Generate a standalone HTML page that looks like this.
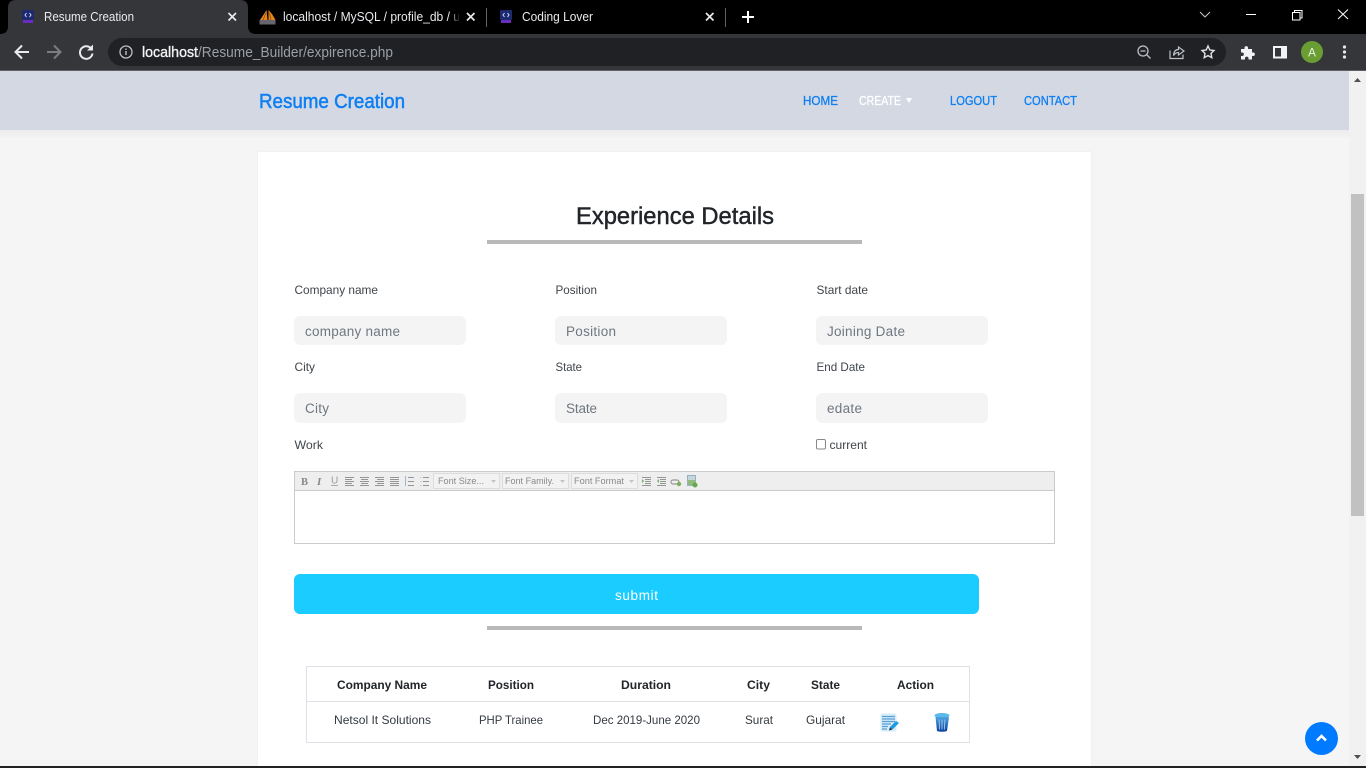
<!DOCTYPE html>
<html><head><meta charset="utf-8"><title>Resume Creation</title>
<style>
html,body{margin:0;padding:0;width:1366px;height:768px;overflow:hidden;background:#f5f5f5}
svg{display:block;position:absolute;left:0;top:0}
text{font-family:"Liberation Sans",sans-serif;white-space:pre}
</style></head><body>
<svg width="1366" height="768" viewBox="0 0 1366 768" xmlns="http://www.w3.org/2000/svg">
<defs>
<linearGradient id="sh" x1="0" y1="0" x2="0" y2="1"><stop offset="0" stop-color="#ebebeb"/><stop offset="1" stop-color="#f5f5f5"/></linearGradient>
<linearGradient id="fade" x1="0" y1="0" x2="1" y2="0"><stop offset="0" stop-color="#000" stop-opacity="0"/><stop offset="1" stop-color="#000"/></linearGradient>
<linearGradient id="tr" x1="0" y1="0" x2="0" y2="1"><stop offset="0" stop-color="#4aa3e0"/><stop offset="1" stop-color="#0b3f9e"/></linearGradient>
<g id="fav"><rect x="0" y="0" width="12" height="10" rx="1" fill="#1d2a6e"/><rect x="1" y="10" width="10" height="3" fill="#6a2bc0"/><path d="M4.500 3 L3 5 L4.500 7 M7.500 3 L9 5 L7.500 7" stroke="#cfd6ff" stroke-width="1" fill="none"/></g>
</defs>

<!-- page -->
<rect width="1366" height="768" fill="#f5f5f5"/>
<rect x="0" y="130" width="1349" height="9" fill="url(#sh)"/>
<rect x="0" y="71" width="1349" height="59" fill="#d4d8e3"/>
<rect x="257" y="151" width="835" height="620" fill="#f1f1f1"/>
<rect x="258" y="152" width="833" height="620" fill="#ffffff"/>

<!-- nav -->
<text x="259" y="108" font-size="20" fill="#0d7ff2" stroke="#0d7ff2" stroke-width=".5" textLength="146" lengthAdjust="spacingAndGlyphs">Resume Creation</text>
<g font-size="12.500" stroke-width=".3">
<text x="803" y="105" fill="#0d7ff2" stroke="#0d7ff2" textLength="35" lengthAdjust="spacingAndGlyphs">HOME</text>
<text x="859" y="105" fill="#ffffff" stroke="#ffffff" textLength="42" lengthAdjust="spacingAndGlyphs">CREATE</text>
<text x="950" y="105" fill="#0d7ff2" stroke="#0d7ff2" textLength="47" lengthAdjust="spacingAndGlyphs">LOGOUT</text>
<text x="1024" y="105" fill="#0d7ff2" stroke="#0d7ff2" textLength="53" lengthAdjust="spacingAndGlyphs">CONTACT</text>
</g>
<path d="M906 98 L912 98 L909 103 Z" fill="#fff"/>

<!-- heading -->
<text x="576" y="224" font-size="24" fill="#212529" stroke="#212529" stroke-width=".45" textLength="198" lengthAdjust="spacingAndGlyphs">Experience Details</text>
<rect x="487" y="240" width="375" height="4" fill="#b9b9b9"/>

<!-- labels -->
<g font-size="12" fill="#3f454b">
<text x="294.500" y="294" textLength="83.500" lengthAdjust="spacingAndGlyphs">Company name</text>
<text x="555.500" y="294" textLength="41.500" lengthAdjust="spacingAndGlyphs">Position</text>
<text x="816.500" y="294" textLength="51.500" lengthAdjust="spacingAndGlyphs">Start date</text>
<text x="294.500" y="371" textLength="20.500" lengthAdjust="spacingAndGlyphs">City</text>
<text x="555.500" y="371" textLength="26.500" lengthAdjust="spacingAndGlyphs">State</text>
<text x="816.500" y="371" textLength="48.500" lengthAdjust="spacingAndGlyphs">End Date</text>
<text x="294.500" y="449" textLength="28.500" lengthAdjust="spacingAndGlyphs">Work</text>
<text x="829.500" y="449" textLength="37.500" lengthAdjust="spacingAndGlyphs">current</text>
</g>

<!-- inputs -->
<g fill="#f4f4f4">
<rect x="294" y="316" width="172" height="29" rx="6"/>
<rect x="555" y="316" width="172" height="29" rx="6"/>
<rect x="816" y="316" width="172" height="29" rx="6"/>
<rect x="294" y="393" width="172" height="30" rx="6"/>
<rect x="555" y="393" width="172" height="30" rx="6"/>
<rect x="816" y="393" width="172" height="30" rx="6"/>
</g>
<g font-size="13.500" fill="#6f7780">
<text x="305" y="336" textLength="95">company name</text>
<text x="566" y="336" textLength="50">Position</text>
<text x="827" y="336" textLength="78">Joining Date</text>
<text x="305" y="413" textLength="24">City</text>
<text x="566" y="413" textLength="31">State</text>
<text x="827" y="413" textLength="35">edate</text>
</g>
<rect x="816.500" y="439.500" width="9" height="9.500" rx="1.500" fill="#fff" stroke="#888"/>

<!-- editor -->
<rect x="294.500" y="471.500" width="760" height="72" fill="#fff" stroke="#cbcbcb"/>
<rect x="295" y="472" width="759" height="18" fill="#eeeeee"/>
<rect x="295" y="490" width="759" height="1" fill="#cbcbcb"/>
<text x="301" y="485" font-size="10.500" font-weight="700" fill="#888" style="font-family:'Liberation Serif',serif">B</text>
<text x="317" y="485" font-size="11" font-style="italic" font-weight="700" fill="#888" style="font-family:'Liberation Serif',serif">I</text>
<text x="331" y="483.500" font-size="10" fill="#999">U</text>
<rect x="331" y="485" width="7" height="1" fill="#aaa"/>
<g stroke="#959595" stroke-width="1" fill="none">
<path d="M345 477.500h9M345 479.500h7M345 481.500h9M345 483.500h7M345 485.500h9"/>
<path d="M360 477.500h9M361 479.500h7M360 481.500h9M361 483.500h7M360 485.500h9"/>
<path d="M375 477.500h9M377 479.500h7M375 481.500h9M377 483.500h7M375 485.500h9"/>
<path d="M390 477.500h9M390 479.500h9M390 481.500h9M390 483.500h9M390 485.500h9"/>
<path d="M408 477.500h6M408 481.500h6M408 485.500h6M423 477.500h6M423 481.500h6M423 485.500h6"/>
<path stroke="#9fb8d8" d="M405.500 476v10M420.500 477.500h1M420.500 481.500h1M420.500 485.500h1"/>
</g>
<g fill="#f2f2f2" stroke="#dcdcdc">
<rect x="433.500" y="473.500" width="66" height="15"/>
<rect x="502.500" y="473.500" width="66" height="15"/>
<rect x="571.500" y="473.500" width="66" height="15"/>
</g>
<g font-size="9.500" fill="#8a8a8a">
<text x="438" y="484" textLength="46" lengthAdjust="spacingAndGlyphs">Font Size...</text>
<text x="505" y="484" textLength="49" lengthAdjust="spacingAndGlyphs">Font Family.</text>
<text x="574" y="484" textLength="50" lengthAdjust="spacingAndGlyphs">Font Format</text>
</g>
<path d="M491 480h5l-2.500 3zM560 480h5l-2.500 3zM629 480h5l-2.500 3z" fill="#c4c4c4"/>
<g stroke="#959595" stroke-width="1" fill="none">
<path d="M642 477.500h9M645 479.500h6M645 481.500h6M645 483.500h6M642 485.500h9"/>
<path d="M657 477.500h9M660 479.500h6M660 481.500h6M660 483.500h6M657 485.500h9"/>
</g>
<path d="M642 479l2 2-2 2zM659 479l-2 2 2 2z" fill="#7aaa7a"/>
<path d="M673 480h4a2 2 0 0 1 0 4h-4a2 2 0 0 1 0-4z" fill="none" stroke="#999" stroke-width="1.200"/>
<circle cx="679" cy="484" r="2.200" fill="#7ab060"/>
<rect x="687.500" y="475.500" width="8" height="10" fill="#c4d6dc" stroke="#9ab0c0"/>
<rect x="688" y="480" width="7" height="5" fill="#8fbb7c"/>
<circle cx="695" cy="485" r="2.500" fill="#6aa84f"/>

<!-- submit -->
<rect x="294" y="574" width="685" height="40" rx="6" fill="#1accff"/>
<text x="615" y="600" font-size="13.500" fill="#ffffff" textLength="43">submit</text>
<rect x="487" y="626" width="375" height="4" fill="#b9b9b9"/>

<!-- table -->
<rect x="306.500" y="666.500" width="663" height="76" fill="#fff" stroke="#dee2e6"/>
<rect x="307" y="701" width="662" height="1" fill="#dee2e6"/>
<g font-size="12" font-weight="700" fill="#212529">
<text x="337" y="689" textLength="90" lengthAdjust="spacingAndGlyphs">Company Name</text>
<text x="488" y="689" textLength="46" lengthAdjust="spacingAndGlyphs">Position</text>
<text x="621" y="689" textLength="50" lengthAdjust="spacingAndGlyphs">Duration</text>
<text x="747" y="689" textLength="23" lengthAdjust="spacingAndGlyphs">City</text>
<text x="811" y="689" textLength="29" lengthAdjust="spacingAndGlyphs">State</text>
<text x="897" y="689" textLength="37" lengthAdjust="spacingAndGlyphs">Action</text>
</g>
<g font-size="12" fill="#343a40">
<text x="334" y="724" textLength="97" lengthAdjust="spacingAndGlyphs">Netsol It Solutions</text>
<text x="479" y="724" textLength="64" lengthAdjust="spacingAndGlyphs">PHP Trainee</text>
<text x="593" y="724" textLength="107" lengthAdjust="spacingAndGlyphs">Dec 2019-June 2020</text>
<text x="745" y="724" textLength="28" lengthAdjust="spacingAndGlyphs">Surat</text>
<text x="806" y="724" textLength="39" lengthAdjust="spacingAndGlyphs">Gujarat</text>
</g>
<!-- edit icon -->
<rect x="880.500" y="713.500" width="16" height="18" rx="2" fill="#d5ecfb"/>
<path d="M882 716.500h13M882 719h13M882 721.500h13M882 724h9M882 726.500h6M882 729h5" stroke="#5a9cd6" stroke-width="1.200"/>
<path d="M889 730l1-3 6-6 3 2-6 6z" fill="#1f9be0"/>
<path d="M889 730.500l1-3 2.500 2z" fill="#333"/>
<!-- trash icon -->
<ellipse cx="942" cy="715.500" rx="7.500" ry="2.500" fill="#5bb8e8"/>
<path d="M935.500 717 L949 717 L947 731 Q942 732.500 937 731 Z" fill="url(#tr)"/>
<path d="M939 719.500l.6 10M942 719.500v10M945 719.500l-.6 10" stroke="#bcd7f0" stroke-width=".8"/>

<!-- scrollbar -->
<rect x="1349" y="71" width="17" height="697" fill="#f1f1f1"/>
<path d="M1354 82 L1361 82 L1357.500 78 Z" fill="#505050"/>
<path d="M1354 755 L1361 755 L1357.500 759 Z" fill="#505050"/>
<rect x="1351" y="194" width="13" height="322" fill="#c1c1c1"/>

<!-- back to top -->
<circle cx="1321.500" cy="738.500" r="16.500" fill="#007bff"/>
<path d="M1317 740.500 L1321.500 736 L1326 740.500" fill="none" stroke="#fff" stroke-width="2.600"/>

<rect x="0" y="766" width="1366" height="2" fill="#222"/>

<!-- browser chrome -->
<rect x="0" y="0" width="1366" height="34" fill="#000"/>
<rect x="0" y="34" width="1366" height="36" fill="#35363a"/>
<rect x="0" y="70" width="1366" height="1" fill="#5f6063"/>
<path d="M0 34 Q8 34 8 26 V8 Q8 0 16 0 H240 Q248 0 248 8 V26 Q248 34 256 34 Z" fill="#35363a"/>
<use href="#fav" x="22" y="10"/>
<text x="44" y="21" font-size="12.500" fill="#e8eaed" textLength="90" lengthAdjust="spacingAndGlyphs">Resume Creation</text>
<path d="M228.500 13 L236 20.500 M236 13 L228.500 20.500" stroke="#e8eaed" stroke-width="1.700"/>

<path d="M260 20 L264 14 L266.500 10 L267.500 20 Z M268.500 20 L268.500 10 L272 14 L275.500 20 Z" fill="#e8861a"/>
<path d="M263 20 L266 13 M271 20 L269.500 13" stroke="#8a4a10" stroke-width=".8"/>
<rect x="259.500" y="20" width="16" height="4.500" fill="#666670"/>
<text x="283" y="21" font-size="12.500" fill="#e8eaed" textLength="177" lengthAdjust="spacingAndGlyphs">localhost / MySQL / profile_db / u</text>
<rect x="450" y="8" width="10" height="20" fill="url(#fade)"/>
<rect x="460" y="8" width="17" height="20" fill="#000"/>
<path d="M467 13 L474.500 20.500 M474.500 13 L467 20.500" stroke="#e8eaed" stroke-width="1.700"/>
<rect x="486" y="8" width="1" height="19" fill="#5f6368"/>

<use href="#fav" x="500" y="10"/>
<text x="522" y="21" font-size="12.500" fill="#e8eaed" textLength="71" lengthAdjust="spacingAndGlyphs">Coding Lover</text>
<path d="M706 13 L713.500 20.500 M713.500 13 L706 20.500" stroke="#e8eaed" stroke-width="1.700"/>
<rect x="725" y="8" width="1" height="19" fill="#5f6368"/>
<path d="M748 11 V23 M742 17 H754" stroke="#fff" stroke-width="2"/>

<!-- window controls -->
<path d="M1200 12 L1205 17 L1210 12" fill="none" stroke="#c8c8c8" stroke-width="1"/>
<rect x="1246" y="14" width="10" height="1" fill="#fff"/>
<path d="M1292.500 12.500h7.500v7.500h-7.500z M1294.500 12.500v-2h7.500v7.500h-2" fill="none" stroke="#fff" stroke-width="1"/>
<path d="M1338 9.500 L1348 19 M1348 9.500 L1338 19" stroke="#fff" stroke-width="1"/>

<!-- toolbar -->
<path d="M29 52 H16 M22 45.500 L15.500 52 L22 58.500" fill="none" stroke="#e8eaed" stroke-width="2"/>
<path d="M47 52 H60 M54 45.500 L60.500 52 L54 58.500" fill="none" stroke="#7b7d80" stroke-width="2"/>
<path d="M91.500 49 A6.300 6.300 0 1 0 92.500 53.500" fill="none" stroke="#e8eaed" stroke-width="2"/>
<path d="M93 44.500 V50.500 H87 Z" fill="#e8eaed"/>
<rect x="108" y="38" width="1118" height="28" rx="14" fill="#202124"/>
<circle cx="126" cy="52" r="6" fill="none" stroke="#bdc1c6" stroke-width="1.300"/>
<rect x="125.300" y="51" width="1.400" height="4" fill="#bdc1c6"/>
<rect x="125.300" y="48.500" width="1.400" height="1.400" fill="#bdc1c6"/>
<text x="142" y="57" font-size="14.500" fill="#f1f3f4" stroke="#f1f3f4" stroke-width=".35" textLength="56" lengthAdjust="spacingAndGlyphs">localhost</text>
<text x="198" y="57" font-size="14.500" fill="#9aa0a6" textLength="195" lengthAdjust="spacingAndGlyphs">/Resume_Builder/expirence.php</text>
<circle cx="1143" cy="51" r="5" fill="none" stroke="#bdc1c6" stroke-width="1.300"/>
<path d="M1140.500 51h5M1147 55 L1150.500 58.500" stroke="#bdc1c6" stroke-width="1.300"/>
<path d="M1170 50.500 V58.500 H1183 V54.500" fill="none" stroke="#bdc1c6" stroke-width="1.200"/>
<path d="M1173.500 55.500 Q1174 49.500 1178.500 49.500 V47 L1184 51 L1178.500 55 V52.500 Q1175.500 52.500 1173.500 55.500 Z" fill="none" stroke="#bdc1c6" stroke-width="1.200"/>
<path d="M1208 46 L1209.800 50 L1214 50.500 L1211 53.400 L1211.800 57.700 L1208 55.600 L1204.200 57.700 L1205 53.400 L1202 50.500 L1206.200 50 Z" fill="none" stroke="#e0e2e5" stroke-width="1.400"/>
<path d="M1241 49 H1244.500 V47.500 A1.800 1.800 0 0 1 1248 47.500 V49 H1252 V52.500 H1253.500 A1.800 1.800 0 0 1 1253.500 56 H1252 V59.500 H1248.500 V58 A1.800 1.800 0 0 0 1245 58 V59.500 H1241 V56 H1242.500 A1.800 1.800 0 0 0 1242.500 52.500 H1241 Z" fill="#f1f3f4"/>
<rect x="1273" y="46" width="14" height="12.500" fill="#f1f3f4"/>
<rect x="1275" y="48" width="6" height="8.500" fill="#35363a"/>
<circle cx="1312" cy="52" r="11" fill="#6a9e34"/>
<text x="1308" y="56.500" font-size="12" fill="#e8f0e0" textLength="8" lengthAdjust="spacingAndGlyphs">A</text>
<circle cx="1344.500" cy="47" r="1.600" fill="#e8eaed"/><circle cx="1344.500" cy="52" r="1.600" fill="#e8eaed"/><circle cx="1344.500" cy="57" r="1.600" fill="#e8eaed"/>
</svg>
</body></html>
